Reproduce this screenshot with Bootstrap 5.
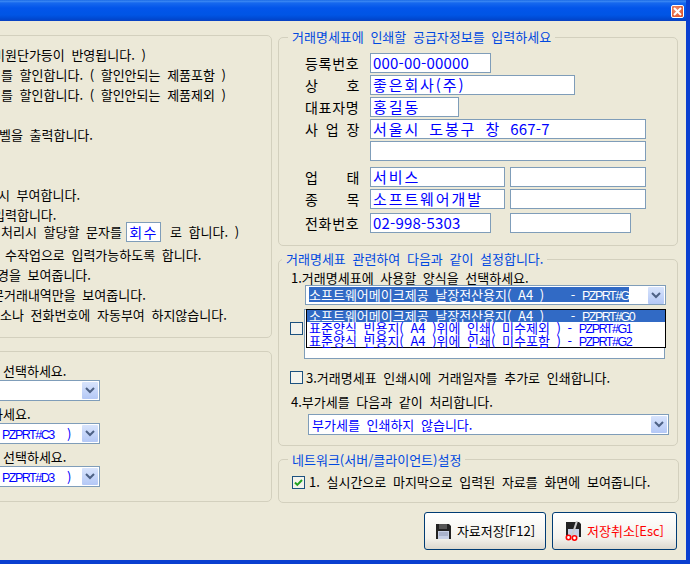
<!DOCTYPE html>
<html lang="ko"><head><meta charset="utf-8"><title>설정</title>
<link rel="stylesheet" href="https://cdn.jsdelivr.net/npm/bootstrap@5.3.0/dist/css/bootstrap.min.css">
<style>
html,body{margin:0;background:#ECE9D8}
body{font-family:"Noto Sans CJK KR","Liberation Sans",sans-serif;font-size:13px;color:#000;letter-spacing:0;word-spacing:3px;overflow:hidden}
.xpwin{width:690px;height:564px;background:#ECE9D8;border-right:4px solid #0A3FD0;border-bottom:4px solid #0A3FD0;overflow:hidden}
.xptitle{height:21px;background:linear-gradient(180deg,#0A5BE0 0,#3F8CF3 1px,#1668EE 3px,#0255EA 8px,#0055E5 15px,#0048D0 19px,#0A3FC0 21px);padding:5px 2px 0 0}
.xpclose{width:13px;height:13px;border:1px solid #fff;border-radius:2px;background:radial-gradient(circle at 35% 35%,#F09070,#D8471F);color:#fff}
.xpmain{height:539px}
.colleft{width:272px;margin-top:14px;overflow:hidden;flex:none}
.colright{width:400px;margin-left:6px;margin-top:16px;flex:none}
.grp{border:1px solid #D3D0BE;border-radius:5px;position:relative}
.grpl{margin-left:-12px}
.gl1{height:303px;padding-top:9px}
.gl2{height:151px;margin-top:13px;padding-top:9px;padding-left:12px}
.gr1{height:209px;padding:15px 0 0 26px}
.gr2{height:187px;margin-top:13px}
.gr3{height:44px;margin-top:13px;width:401px}
.gtitle{position:absolute;background:#ECE9D8;color:#0048E0;line-height:14px;white-space:nowrap;padding:0 4px}
.gt1{left:9px;top:-8px}
.gt2{left:3px;top:-8px}
.gt3{left:9px;top:-7px}
.ln{height:20px;line-height:20px;white-space:nowrap;padding-left:12px}
.ln3{margin-top:-3px;margin-bottom:3px}
.cl1{margin-left:-8px}
.cl2{margin-left:-14px}
.cl3{margin-left:-3px}
.cl4{margin-left:-8px}
.cl5{margin-left:-16px}
.cl6{margin-left:-9px}
.cl7{margin-left:-13px}
.cl8{margin-left:-22px}
.fld{height:20px;border:1px solid #7F9DB9;background:#fff;color:#00f;font-size:15px;line-height:18px;padding:0 2px;white-space:nowrap;overflow:hidden;letter-spacing:1.9px;flex:none}
.digit{letter-spacing:.2px}
.lab{width:55px;margin-right:10px;flex:none;font-size:14px;line-height:20px;text-align:justify;text-align-last:justify;letter-spacing:.7px;word-spacing:0;white-space:nowrap}
.frow{height:20px;margin-bottom:2px}
.fg1{margin-bottom:6px}
.fg2{margin-bottom:4px}
.w121{width:121px}.w205{width:205px}.w89{width:89px}.w276{width:276px}.w135{width:135px}.w136{width:136px}.w121b{width:121px}
.gapx{margin-left:5px}
.gapy{margin-left:19px}
.hoesu{display:inline-block;width:35px;height:20px;text-align:center;margin:0 9px 0 4px;vertical-align:top;letter-spacing:1.2px;font-size:14px;padding:0}
.xpsel{border:1px solid #7F9DB9;background:#fff;color:#00f;height:21px;padding:1px 1px 1px 2px;white-space:nowrap;overflow:hidden;line-height:17px;font-size:13px}
.xpsel>span:first-child{flex:1 1 auto;min-width:0;overflow:hidden;padding-left:1px}
.xparrow{width:16px;height:17px;flex:none;background:linear-gradient(180deg,#D8E4FC,#B4C8F6);border-radius:1px;display:flex;align-items:center;justify-content:center}
.lat{font-family:"Liberation Sans",sans-serif;font-size:12.5px;letter-spacing:-1.5px}
.ll2{height:19px;line-height:19px;padding-left:12px;white-space:nowrap}
.lsel{width:111px;margin-left:-12px;margin-bottom:3px}
.lsel>span:first-child{padding-left:9px}
.xpsel.lsel>span:first-child{padding-left:10px}
.lt{padding-left:2px}
.ml3x{padding-left:16px}
.r1{padding:11px 0 0 12px;line-height:14px;height:25px}
.selg{width:361px;margin-left:26px;height:20px}
.chosen{background:#316AC5;color:#fff;display:inline-block;width:320px;height:15px;line-height:15px;white-space:nowrap;overflow:hidden}
.bfield{position:absolute;left:25px;top:49px;width:361px;height:50px;border:1px solid #7F9DB9;background:#fff}
.dropl{position:absolute;left:27px;top:49px;width:360px;height:39px;border:1px solid #000;background:#fff;color:#00f;font-size:13px;line-height:12px;white-space:nowrap;z-index:2}
.dropl div{height:12.3px;padding-left:2px}
.dropl .on{background:#316AC5;color:#fff}
.xck.form-check-input{width:13px;height:13px;margin:0;border:1px solid #1C5180;border-radius:0;background-color:#F4F3EC;flex:none;float:none;box-shadow:none}
.xck.form-check-input:checked{background-color:#F4F3EC;border-color:#1C5180;background-image:url("data:image/svg+xml,%3Csvg xmlns='http://www.w3.org/2000/svg' viewBox='0 0 13 13'%3E%3Cpath d='M3 6.5l2.3 2.4L10 4' fill='none' stroke='%2321A121' stroke-width='2'/%3E%3C/svg%3E");background-size:13px}
.ckabs{position:absolute;left:11px;top:62px}
.ck3{position:absolute;left:11px;top:111px}
.t3{position:absolute;left:27px;top:110px;white-space:nowrap;line-height:15px}
.t4{position:absolute;left:12px;top:134px;white-space:nowrap;line-height:15px}
.sel4{position:absolute;left:29px;top:154px;width:361px}
.g3row{padding:15px 0 0 13px;line-height:14px;white-space:nowrap}
.xpbtns{margin-top:9px;width:400px}
.xpbtn{height:38px;border:1px solid #003C74;border-radius:3px;background:linear-gradient(180deg,#fff,#F3F2EC 70%,#DCD8CE);padding:0;font-size:13px;color:#000;display:flex;align-items:center;justify-content:center;gap:5px}
.bsave{width:122px;margin-right:6px}
.bcancel{width:125px;color:#f00;margin-right:1px}
</style></head>
<body>
<div class="xpwin">
 <div class="xptitle d-flex justify-content-end"><div class="xpclose d-flex align-items-center justify-content-center"><svg width="9" height="9" viewBox="0 0 9 9"><path d="M1 1l7 7M8 1l-7 7" stroke="#fff" stroke-width="2"/></svg></div></div>
 <div class="xpmain d-flex">
  <div class="colleft">
   <div class="grp grpl gl1">
    <div class="ln"><span class="cl1 d-inline-block">비원단가등이 반영됩니다. )</span></div>
    <div class="ln">를 할인합니다. ( 할인안되는 제품포함 )</div>
    <div class="ln">를 할인합니다. ( 할인안되는 제품제외 )</div>
    <div class="ln"></div>
    <div class="ln"><span class="cl2 d-inline-block">라벨을 출력합니다.</span></div>
    <div class="ln"></div><div class="ln"></div>
    <div class="ln"><span class="cl3 d-inline-block">시 부여합니다.</span></div>
    <div class="ln"><span class="cl4 d-inline-block">입력합니다.</span></div>
    <div class="ln ln3">처리시 할당할 문자를<span class="fld hoesu">회수</span>로 합니다. )</div>
    <div class="ln ml3x">수작업으로 입력가능하도록 합니다.</div>
    <div class="ln"><span class="cl5 d-inline-block">변경을 보여줍니다.</span></div>
    <div class="ln"><span class="cl6 d-inline-block">문거래내역만을 보여줍니다.</span></div>
    <div class="ln"><span class="cl7 d-inline-block">주소나 전화번호에 자동부여 하지않습니다.</span></div>
   </div>
   <div class="grp grpl gl2">
    <div class="ll2 lt">선택하세요.</div>
    <div class="xpsel d-flex lsel"><span></span><span class="xparrow"><svg width="10" height="7" viewBox="0 0 10 7"><path d="M1 1l4 4 4-4" fill="none" stroke="#4D6185" stroke-width="2"/></svg></span></div>
    <div class="ll2"><span class="cl8 d-inline-block">하세요.</span></div>
    <div class="xpsel d-flex lsel"><span><span class="lat">PZPRT#C3</span>&nbsp; )</span><span class="xparrow"><svg width="10" height="7" viewBox="0 0 10 7"><path d="M1 1l4 4 4-4" fill="none" stroke="#4D6185" stroke-width="2"/></svg></span></div>
    <div class="ll2 lt">선택하세요.</div>
    <div class="xpsel d-flex lsel"><span><span class="lat">PZPRT#D3</span>&nbsp; )</span><span class="xparrow"><svg width="10" height="7" viewBox="0 0 10 7"><path d="M1 1l4 4 4-4" fill="none" stroke="#4D6185" stroke-width="2"/></svg></span></div>
   </div>
  </div>
  <div class="colright">
   <div class="grp gr1">
    <div class="gtitle gt1">거래명세표에 인쇄할 공급자정보를 입력하세요</div>
    <div class="d-flex frow"><span class="lab">등록번호</span><div class="fld w121 digit">000-00-00000</div></div>
    <div class="d-flex frow"><span class="lab">상 호</span><div class="fld w205">좋은회사(주)</div></div>
    <div class="d-flex frow"><span class="lab">대표자명</span><div class="fld w89">홍길동</div></div>
    <div class="d-flex frow"><span class="lab">사 업 장</span><div class="fld w276">서울시 도봉구 창 <span class="digit">667-7</span></div></div>
    <div class="d-flex frow fg1"><span class="lab"></span><div class="fld w276"></div></div>
    <div class="d-flex frow"><span class="lab">업 태</span><div class="fld w135">서비스</div><div class="fld w136 gapx"></div></div>
    <div class="d-flex frow fg2"><span class="lab">종 목</span><div class="fld w135">소프트웨어개발</div><div class="fld w136 gapx"></div></div>
    <div class="d-flex frow"><span class="lab">전화번호</span><div class="fld w121 digit">02-998-5303</div><div class="fld w121b gapy"></div></div>
   </div>
   <div class="grp gr2">
    <div class="gtitle gt2">거래명세표 관련하여 다음과 같이 설정합니다.</div>
    <div class="r1">1.거래명세표에 사용할 양식을 선택하세요.</div>
    <div class="bfield"></div>
    <div class="xpsel d-flex selg"><span><span class="chosen">소프트웨어메이크제공 날장전산용지( A4 )&nbsp;&nbsp;&nbsp;&nbsp;- <span class="lat">PZPRT#G0</span></span></span><span class="xparrow"><svg width="10" height="7" viewBox="0 0 10 7"><path d="M1 1l4 4 4-4" fill="none" stroke="#4D6185" stroke-width="2"/></svg></span></div>
    <div class="dropl"><div class="on">소프트웨어메이크제공 날장전산용지( A4 )&nbsp;&nbsp;&nbsp;&nbsp;- <span class="lat">PZPRT#G0</span></div><div>표준양식 빈용지( A4 )위에 인쇄( 미수제외 ) - <span class="lat">PZPRT#G1</span></div><div>표준양식 빈용지( A4 )위에 인쇄( 미수포함 ) - <span class="lat">PZPRT#G2</span></div></div>
    <input class="form-check-input xck ckabs" type="checkbox" aria-label="2">
    <input class="form-check-input xck ck3" type="checkbox" aria-label="3">
    <div class="t3">3.거래명세표 인쇄시에 거래일자를 추가로 인쇄합니다.</div>
    <div class="t4">4.부가세를 다음과 같이 처리합니다.</div>
    <div class="xpsel d-flex sel4"><span>부가세를 인쇄하지 않습니다.</span><span class="xparrow"><svg width="10" height="7" viewBox="0 0 10 7"><path d="M1 1l4 4 4-4" fill="none" stroke="#4D6185" stroke-width="2"/></svg></span></div>
   </div>
   <div class="grp gr3">
    <div class="gtitle gt3">네트워크(서버/클라이언트)설정</div>
    <div class="g3row d-flex gap-1 align-items-center"><input class="form-check-input xck" type="checkbox" checked aria-label="1"><span>1. 실시간으로 마지막으로 입력된 자료를 화면에 보여줍니다.</span></div>
   </div>
   <div class="xpbtns d-flex justify-content-end">
    <button type="button" class="xpbtn bsave"><svg width="17" height="17" viewBox="0 0 17 17"><path d="M1 1h13l2 2v13H1z" fill="#222"/><rect x="4" y="1" width="8" height="5" fill="#555"/><rect x="3" y="8" width="11" height="8" fill="#C7D0E6"/><path d="M4 10h9M4 12h9" stroke="#8C96B2"/></svg>자료저장[F12]</button>
    <button type="button" class="xpbtn bcancel"><svg width="17" height="20" viewBox="0 0 17 20"><path d="M1 1h13l2 2v13H1z" fill="#222"/><rect x="3" y="8" width="11" height="8" fill="#C7D0E6"/><path d="M12 0L8 12l-2 3" stroke="#ccc" stroke-width="2" fill="none"/><circle cx="3.5" cy="16.5" r="2.2" fill="#fff" stroke="#f00" stroke-width="1.6"/><circle cx="9.5" cy="17" r="2.2" fill="#fff" stroke="#f00" stroke-width="1.6"/></svg>저장취소[Esc]</button>
   </div>
  </div>
 </div>
</div>
<script src="https://cdn.jsdelivr.net/npm/bootstrap@5.3.0/dist/js/bootstrap.bundle.min.js"></script>
</body></html>
